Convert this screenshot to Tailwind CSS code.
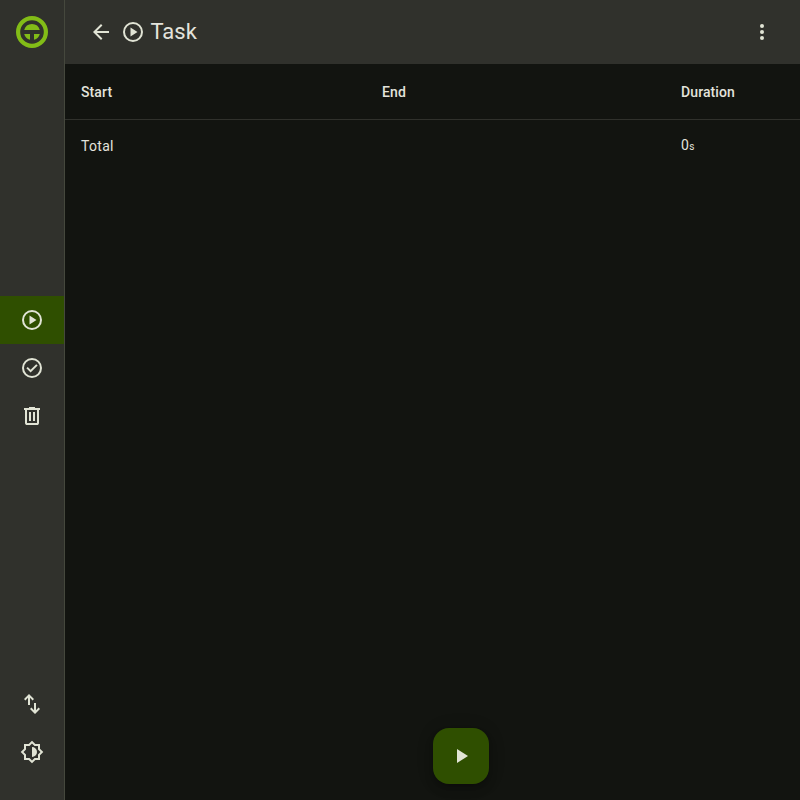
<!DOCTYPE html>
<html lang="en">
<head>
<meta charset="utf-8">
<title>Task</title>
<script src="https://cdn.jsdelivr.net/npm/@tailwindcss/browser@4"></script>
</head>
<body class="flex h-screen overflow-hidden bg-[#121410] font-[Roboto,sans-serif] text-[#e3e3dc]">
<nav class="flex w-[65px] shrink-0 flex-col border-r border-[#45483d] bg-[#30312c] text-[#e1e4d5]">
  <div class="flex h-16 items-center justify-center">
    <svg class="size-8" viewBox="0 0 32 32" fill="#82bc17"><circle cx="16" cy="16" r="13.9" fill="none" stroke="#82bc17" stroke-width="4.2"/><path d="M8.2 14a8.05 8.05 0 0 1 15.6 0zM8.2 18H14v5.8A8.05 8.05 0 0 1 8.2 18zM18 18h5.8a8.05 8.05 0 0 1-5.8 5.8z"/></svg>
  </div>
  <div class="flex flex-1 flex-col justify-center pb-2">
    <a class="flex h-12 items-center justify-center bg-[#2f4f00]"><svg class="size-6" viewBox="0 0 24 24" fill="currentColor"><path d="M9.5 16.5l7-4.5-7-4.5zM12 22a10 10 0 1 1 0-20 10 10 0 0 1 0 20zm0-2a8 8 0 1 0 0-16 8 8 0 0 0 0 16z"/></svg></a>
    <a class="flex h-12 items-center justify-center"><svg class="size-6" viewBox="0 0 24 24" fill="currentColor"><path d="M10.6 16.6l7.05-7.05-1.4-1.4-5.65 5.65-2.85-2.85-1.4 1.4zM12 22a10 10 0 1 1 0-20 10 10 0 0 1 0 20zm0-2a8 8 0 1 0 0-16 8 8 0 0 0 0 16z"/></svg></a>
    <a class="flex h-12 items-center justify-center"><svg class="size-6" viewBox="0 0 24 24" fill="currentColor"><path d="M7 21q-.825 0-1.412-.587T5 19V6H4V4h5V3h6v1h5v2h-1v13q0 .825-.587 1.413T17 21zM17 6H7v13h10zM9 17h2V8H9zm4 0h2V8h-2z"/></svg></a>
  </div>
  <div class="pb-6">
    <a class="flex h-12 items-center justify-center"><svg class="size-6" viewBox="0 0 24 24" fill="currentColor"><path d="M8 13V5.825L5.425 8.4 4 7l5-5 5 5-1.425 1.4L10 5.825V13zm7 9l-5-5 1.425-1.4L14 18.175V11h2v7.175l2.575-2.575L20 17z"/></svg></a>
    <a class="flex h-12 items-center justify-center"><svg class="size-6" viewBox="0 0 24 24" fill="currentColor"><path d="M12 17q2.075 0 3.538-1.463T17 12t-1.462-3.537T12 7zm0 6.3L8.65 20H4v-4.65L.7 12 4 8.65V4h4.65L12 .7 15.35 4H20v4.65L23.3 12 20 15.35V20h-4.65zm0-2.8l2.5-2.5H18v-3.5l2.5-2.5L18 9.5V6h-3.5L12 3.5 9.5 6H6v3.5L3.5 12 6 14.5V18h3.5z"/></svg></a>
  </div>
</nav>
<main class="relative flex flex-1 flex-col">
  <header class="flex h-16 shrink-0 items-center bg-[#30312c] pr-[26px] pl-6 text-[#e1e4d5]">
    <svg class="size-6" viewBox="0 0 24 24" fill="currentColor"><path d="M7.825 13l5.6 5.6L12 20l-8-8 8-8 1.425 1.4-5.6 5.6H20v2z"/></svg>
    <svg class="ml-2 size-6" viewBox="0 0 24 24" fill="currentColor"><path d="M9.5 16.5l7-4.5-7-4.5zM12 22a10 10 0 1 1 0-20 10 10 0 0 1 0 20zm0-2a8 8 0 1 0 0-16 8 8 0 0 0 0 16z"/></svg>
    <h1 class="ml-[5.45px] flex-1 text-[22px] leading-7 text-[#e3e3dc]">Task</h1>
    <svg class="size-6" viewBox="0 0 24 24" fill="currentColor"><circle cx="12" cy="6" r="2"/><circle cx="12" cy="12" r="2"/><circle cx="12" cy="18" r="2"/></svg>
  </header>
  <div class="grid h-14 grid-cols-[301px_299px_1fr] items-center border-b border-[#30312c] pl-4 text-sm font-medium tracking-[0.1px]">
    <div>Start</div><div>End</div><div>Duration</div>
  </div>
  <div class="grid h-[52px] grid-cols-[301px_299px_1fr] items-center pl-4 text-sm tracking-[0.3px]">
    <div>Total</div><div></div><div class="pb-0.5 tracking-[0.25px]">0<span class="text-[10px]">s</span></div>
  </div>
  <button class="absolute bottom-4 left-[368px] flex size-14 items-center justify-center rounded-2xl bg-[#2f4f00] text-[#e1e4d5] shadow-[0_3px_5px_-1px_rgba(0,0,0,0.2),0_6px_10px_rgba(0,0,0,0.14),0_1px_18px_rgba(0,0,0,0.12)]"><svg class="size-6" viewBox="0 0 24 24" fill="currentColor"><path d="M8 19V5l11 7z"/></svg></button>
</main>
</body>
</html>
